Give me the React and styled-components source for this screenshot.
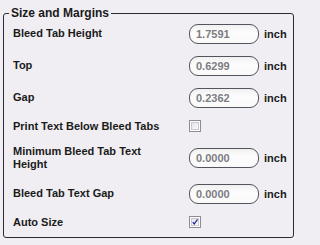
import React from 'react';
import styled, { createGlobalStyle } from 'styled-components';

const GlobalStyle = createGlobalStyle`
    body {
        margin: 0;
        background: #f0eef2;
        font-family: "Liberation Sans", Arial, sans-serif;
    }
`;

const Page = styled.div`
    width: 298px;
    height: 245px;
    padding: 6px 0 0 3px;
    box-sizing: border-box;
`;

const Group = styled.fieldset`
    width: 291px;
    box-sizing: border-box;
    margin: 0;
    padding: 3px 0 8px 9px;
    border: 1px solid #2c2a34;
    border-radius: 3px;
    display: flex;
    flex-direction: column;
    gap: 11px;
`;

const Legend = styled.legend`
    margin-left: -4px;
    padding: 0 2px;
    font-size: 12px;
    line-height: 14px;
    font-weight: bold;
    color: #1a1a1a;
`;

const Row = styled.div`
    display: grid;
    grid-template-columns: 171px 70px auto;
    column-gap: 5px;
    align-items: center;
    height: ${({ h }) => h || 21}px;
`;

const Label = styled.div`
    max-width: 152px;
    font-size: 11px;
    line-height: 13px;
    font-weight: bold;
    color: #1a1a1a;
`;

const Field = styled.div`
    height: 20px;
    box-sizing: border-box;
    border: 1px solid #55535d;
    border-radius: 9px;
    background: linear-gradient(#f0f0f0, #fcfcfc 40%, #fafafa);
    padding-left: 6px;
    display: flex;
    align-items: center;
    font-size: 11px;
    font-weight: bold;
    color: #7c7c82;
`;

const Unit = styled.span`
    font-size: 11px;
    font-weight: bold;
    color: #1a1a1a;
`;

const Check = styled.div`
    width: 12px;
    height: 12px;
    box-sizing: border-box;
    border: 1px solid #8d8c92;
    background: #fff;
    padding: 1px;
    display: flex;
    align-items: center;
    justify-content: center;
    span {
        width: 8px;
        height: 8px;
        box-sizing: border-box;
        border: 1px solid #c9c8cc;
        background: linear-gradient(135deg, #e4e3e8, #fbfbfd);
        display: flex;
        align-items: center;
        justify-content: center;
    }
`;

const CheckBox = ({ checked }) => (
    <Check>
        <span>
            {checked && (
                <svg width="8" height="8" viewBox="0 0 8 8">
                    <path d="M1 4.2 L3 6.6 L7.4 0.6" fill="none" stroke="#25239a" strokeWidth="1.6" />
                </svg>
            )}
        </span>
    </Check>
);

const fields = [
    { label: 'Bleed Tab Height', value: '1.7591' },
    { label: 'Top', value: '0.6299' },
    { label: 'Gap', value: '0.2362' },
];

const App = () => (
    <Page>
        <GlobalStyle />
        <Group>
            <Legend>Size and Margins</Legend>
            {fields.map((f) => (
                <Row key={f.label}>
                    <Label>{f.label}</Label>
                    <Field>{f.value}</Field>
                    <Unit>inch</Unit>
                </Row>
            ))}
            <Row h={14}>
                <Label>Print Text Below Bleed Tabs</Label>
                <CheckBox />
            </Row>
            <Row h={28}>
                <Label>Minimum Bleed Tab Text Height</Label>
                <Field>0.0000</Field>
                <Unit>inch</Unit>
            </Row>
            <Row>
                <Label>Bleed Tab Text Gap</Label>
                <Field>0.0000</Field>
                <Unit>inch</Unit>
            </Row>
            <Row h={14}>
                <Label>Auto Size</Label>
                <CheckBox checked />
            </Row>
        </Group>
    </Page>
);

export default App;
